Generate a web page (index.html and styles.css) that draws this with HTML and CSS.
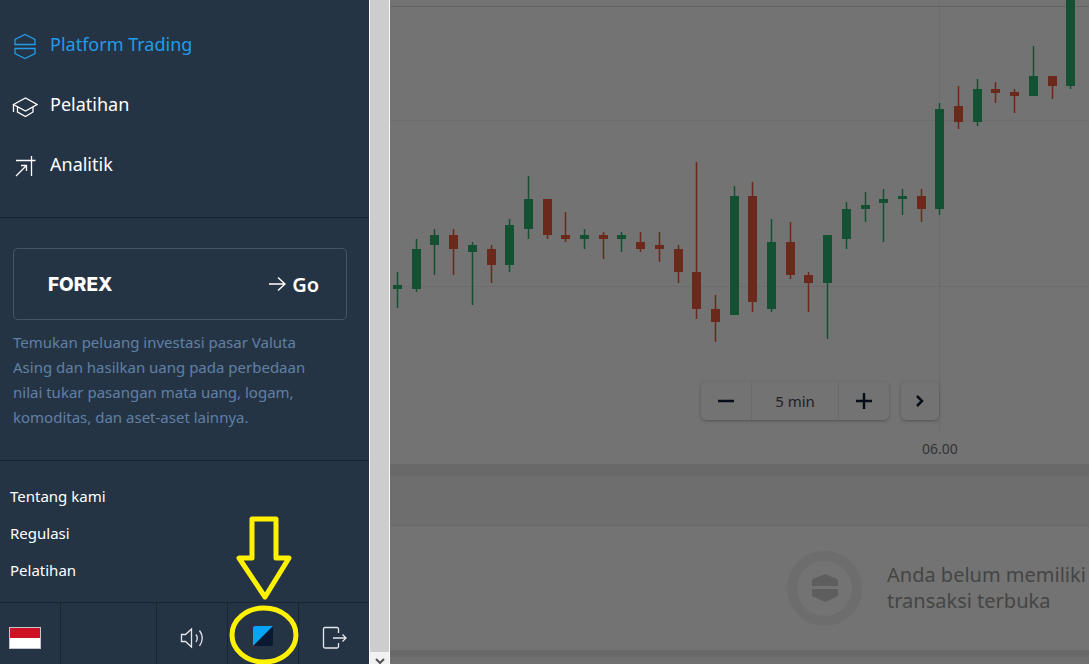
FILE: index.html
```html
<!DOCTYPE html>
<html lang="id">
<head>
<meta charset="utf-8">
<title>Platform Trading</title>
<link rel="stylesheet" href="styles.css">
</head>
<body>
<div class="app">
  <aside class="sidebar">
    <nav class="menu">
      <a class="menu-item active" href="#">
        <svg class="menu-icon" viewBox="0 0 26 26"><path d="M3 11.500V6.500L13 1.500L23 6.500V11.500ZM3 15.500H23V20.500L13 25.500L3 20.500Z"/></svg>
        Platform Trading
      </a>
      <a class="menu-item" href="#">
        <svg class="menu-icon" viewBox="0 0 26 26"><path d="M1.500 11.500L13.500 5L25 11.500L13.500 18ZM1.500 11.500V19M5.500 14V19L13.500 23.500L21 19V14"/></svg>
        Pelatihan
      </a>
      <a class="menu-item" href="#">
        <svg class="menu-icon" viewBox="0 0 26 26"><path d="M4 7.500H23.500M19.500 3V23M4 23L14.500 12.500M9 12.500H14.500V18"/></svg>
        Analitik
      </a>
    </nav>
    <section class="promo">
      <a class="promo-card" href="#">
        <span class="promo-name">FOREX</span>
        <span class="promo-go">
          <svg class="go-arrow" viewBox="0 0 18 16"><path d="M1 8H17M10 1.500L17 8L10 14.500"/></svg>
          Go
        </span>
      </a>
      <p class="promo-text">Temukan peluang investasi pasar Valuta Asing dan hasilkan uang pada perbedaan nilai tukar pasangan mata uang, logam, komoditas, dan aset-aset lainnya.</p>
    </section>
    <nav class="links">
      <a href="#">Tentang kami</a>
      <a href="#">Regulasi</a>
      <a href="#">Pelatihan</a>
    </nav>
    <div class="toolbar">
      <button class="tool" aria-label="Bahasa Indonesia"><span class="flag"></span></button>
      <span class="tool"></span>
      <button class="tool" aria-label="Suara">
        <svg class="tool-icon" viewBox="0 0 26 26"><path d="M2.500 9.500H6.500L12.500 4V22L6.500 16.500H2.500ZM17 9.500Q19.500 13 17 17M20.500 5.500Q26 13 20.500 21"/></svg>
      </button>
      <button class="tool" aria-label="Tema">
        <svg class="theme-icon" viewBox="0 0 20 20"><rect class="theme-dark" width="20" height="20" rx="2"/><path class="theme-light" d="M2 0H20L0 20V2Q0 0 2 0Z"/></svg>
      </button>
      <button class="tool" aria-label="Keluar">
        <svg class="tool-icon" viewBox="0 0 26 26"><path d="M17.500 8V4Q17.500 2.500 16 2.500H4Q2.500 2.500 2.500 4V21.500Q2.500 23 4 23H16Q17.500 23 17.500 21.500V18M12 13H25M21.500 9.500L25 13L21.500 16.500"/></svg>
      </button>
    </div>
    <svg class="pointer" viewBox="0 0 72 152"><path d="M24 7H48V46H61L37 85L11 46H24Z"/><ellipse cx="36" cy="123" rx="32" ry="27"/></svg>
  </aside>
  <div class="scroller"><button class="scroll-down" aria-label="Gulir ke bawah"><svg class="scroll-icon" viewBox="0 0 10 7"><path d="M1 1L5 5L9 1"/></svg></button></div>
  <main class="main">
    <section class="chart">
      <svg class="plot" id="plot">
        <path class="grid-line strong" d="M0 6.500H4000"/>
        <path class="grid-line" d="M0 120.500H4000M0 286.500H4000M549.500 0V432"/>
        <text class="axis-label" x="550" y="454">06.00</text>
      </svg>
      <div class="controls">
        <div class="stepper">
          <button class="step" aria-label="Kurangi"><svg class="step-icon" viewBox="0 0 16 16"><path d="M0 8H16"/></svg></button>
          <span class="period">5 min</span>
          <button class="step" aria-label="Tambah"><svg class="step-icon" viewBox="0 0 16 16"><path d="M0 8H16M8 0V16"/></svg></button>
        </div>
        <button class="next" aria-label="Berikutnya"><svg class="step-icon" viewBox="0 0 16 16"><path d="M5 3L10 8L5 13"/></svg></button>
      </div>
    </section>
    <div class="tabs"></div>
    <section class="empty">
      <span class="badge"><svg class="badge-icon" viewBox="0 0 26 28"><path d="M0 12V7Q0 6 1 5L12 .5Q13 0 14 .5L25 5Q26 6 26 7V12ZM0 15H26V21Q26 22 25 22.500L14 27.500Q13 28 12 27.500L1 22.500Q0 22 0 21Z"/></svg></span>
      <p class="empty-text">Anda belum memiliki<br>transaksi terbuka</p>
    </section>
    <div class="bottom"></div>
  </main>
</div>
<script src="chart.js"></script>
</body>
</html>
```

FILE: styles.css
```css
* { box-sizing: border-box; }
body {
  margin: 0;
  font-family: "Noto Sans", "Open Sans", sans-serif;
  color: #fff;
}
a { color: inherit; text-decoration: none; }
p { margin: 0; }
button {
  margin: 0;
  padding: 0;
  border: 0;
  background: none;
  color: inherit;
  font: inherit;
}
svg { display: block; flex: none; fill: none; }
.app {
  display: grid;
  grid-template-columns: 369px 21px minmax(0, 1fr);
  grid-template-rows: minmax(0, 1fr);
  height: 100vh;
  overflow: hidden;
}

.sidebar {
  position: relative;
  display: flex;
  flex-direction: column;
  background: #253444;
}
.menu { padding: 14px 12px 23px; border-bottom: 1px solid #172431; }
.menu-item {
  display: flex;
  align-items: center;
  gap: 12px;
  height: 60px;
  font-size: 18px;
}
.menu-item.active { color: #219cea; }
.menu-icon {
  width: 26px;
  height: 26px;
  margin-top: 4px;
  stroke: currentColor;
  stroke-width: 1.3;
}
.promo {
  padding: 30px 22px 30px 13px;
  border-bottom: 1px solid #172431;
}
.promo-card {
  display: flex;
  align-items: center;
  justify-content: space-between;
  height: 72px;
  padding: 0 27px 0 34px;
  border: 1px solid #43556a;
  border-radius: 5px;
}
.promo-name { font: 800 19px Inter, sans-serif; }
.promo-go {
  display: flex;
  align-items: center;
  gap: 6px;
  font-size: 20px;
  font-weight: 600;
}
.go-arrow { width: 18px; height: 16px; stroke: #fff; stroke-width: 1.4; }
.promo-text {
  padding: 10px 20px 0 0;
  color: #6080a4;
  font-size: 15px;
  line-height: 25px;
}
.links {
  display: flex;
  flex: 1;
  flex-direction: column;
  padding: 17px 10px 13px;
  font-size: 15px;
  line-height: 37px;
}
.toolbar {
  display: grid;
  grid-template-columns: 61px 96px 71px 71px 1fr;
  height: 62px;
  border-top: 1px solid #172431;
}
.tool {
  display: flex;
  align-items: center;
  justify-content: center;
  padding-top: 8px;
  border-right: 1px solid #172431;
}
.tool:first-child { padding-right: 10px; }
.tool:last-child { border-right: 0; }
.flag {
  width: 32px;
  height: 22px;
  border: 1px solid #c3c7cc;
  background: linear-gradient(#cf1126 50%, #fff 50%);
}
.tool-icon { width: 26px; height: 26px; stroke: #e4e8ec; stroke-width: 1.3; }
.theme-icon { width: 20px; height: 20px; margin-top: -3px; }
.theme-dark { fill: #0b1a30; }
.theme-light { fill: #05a4f4; }
.pointer {
  position: absolute;
  bottom: 0;
  left: 228px;
  width: 72px;
  height: 152px;
  stroke: #fff200;
  stroke-width: 5;
  stroke-linejoin: round;
  pointer-events: none;
}

.scroller {
  display: flex;
  flex-direction: column;
  justify-content: flex-end;
  border: solid #fafafa;
  border-width: 0 1px;
  background: #cdcdcd;
}
.scroll-down {
  display: flex;
  justify-content: center;
  height: 12px;
  padding-top: 6px;
  background: #f1f1f1;
}
.scroll-icon { width: 10px; height: 7px; stroke: #505050; stroke-width: 2; }

.main {
  display: flex;
  flex-direction: column;
  overflow: hidden;
  background: #737373;
  color: #444545;
}
.chart { position: relative; height: 464px; }
.plot { width: 100%; height: 464px; }
.grid-line { stroke: #6c6c6c; }
.grid-line.strong { stroke: #636363; }
.axis-label { fill: #333; font-size: 14px; text-anchor: middle; }
.wick { stroke-width: 1.5; }
.candle-body { stroke-width: 9; }
.up { stroke: #145032; }
.down { stroke: #6b291b; }
.controls {
  position: absolute;
  top: 382px;
  left: 311px;
  display: flex;
  gap: 12px;
  height: 38px;
}
.stepper, .next {
  display: flex;
  align-items: center;
  border-radius: 5px;
  background: #737373;
  box-shadow: 0 1px 3px #545454;
}
.step {
  display: flex;
  align-items: center;
  justify-content: center;
  width: 50px;
  height: 100%;
}
.step-icon { width: 16px; height: 16px; stroke: #080e19; stroke-width: 2.5; }
.period {
  width: 88px;
  border: solid #6b6b6b;
  border-width: 0 1px;
  color: #202226;
  font-size: 15px;
  line-height: 38px;
  text-align: center;
}
.next { justify-content: center; width: 38px; }
.tabs {
  height: 62px;
  border-top: 12px solid #696969;
  border-bottom: 1px solid #696969;
  background: #6e6e6e;
}
.empty {
  display: flex;
  align-items: center;
  gap: 25px;
  height: 124px;
  padding-left: 397px;
}
.badge {
  display: flex;
  flex: none;
  align-items: center;
  justify-content: center;
  width: 75px;
  height: 75px;
  border: 10px solid #6d6d6d;
  border-radius: 50%;
}
.badge-icon { width: 26px; height: 28px; fill: #5e5e5e; }
.empty-text { font-size: 20px; line-height: 26px; white-space: nowrap; }
.bottom { flex: 1; border-top: 7px solid #696969; background: #707070; }
```

FILE: chart.js
```js
// Each candle: [wick top, body top, body bottom, wick bottom, direction]
const candles = [
  [272, 285, 289, 308, "up"], [239, 249, 289, 292, "up"], [229, 235, 245, 275, "up"],
  [229, 235, 249, 275, "down"], [242, 245, 252, 305, "up"], [245, 249, 265, 283, "down"],
  [219, 225, 265, 272, "up"], [176, 199, 229, 239, "up"], [199, 199, 235, 239, "down"],
  [212, 235, 239, 242, "down"], [229, 235, 239, 249, "up"], [232, 235, 239, 259, "down"],
  [232, 235, 239, 252, "up"], [232, 242, 249, 252, "down"], [232, 245, 249, 262, "down"],
  [245, 249, 272, 283, "down"], [162, 272, 309, 319, "down"], [295, 309, 322, 342, "down"],
  [186, 196, 315, 315, "up"], [182, 196, 302, 312, "down"], [219, 242, 309, 312, "up"],
  [222, 242, 275, 279, "down"], [272, 275, 283, 312, "down"], [235, 235, 283, 339, "up"],
  [202, 209, 239, 249, "up"], [192, 205, 209, 222, "up"], [189, 199, 203, 242, "up"],
  [189, 196, 199, 215, "up"], [189, 196, 209, 222, "down"], [103, 109, 209, 215, "up"],
  [86, 106, 122, 129, "down"], [79, 89, 122, 126, "up"], [82, 89, 93, 103, "down"],
  [89, 92, 96, 113, "down"], [46, 76, 96, 96, "up"], [76, 76, 86, 99, "down"],
  [-5, -5, 86, 89, "up"]
];
const plot = document.getElementById("plot");
const firstX = 8;
const step = 18.7;

function bar(x, top, bottom, className) {
  const path = document.createElementNS("http://www.w3.org/2000/svg", "path");
  path.setAttribute("d", `M${x} ${top}V${bottom}`);
  path.setAttribute("class", className);
  plot.appendChild(path);
}

candles.forEach(([high, top, bottom, low, direction], i) => {
  const x = Math.round(firstX + i * step) - 0.5;
  bar(x, high, low, `wick ${direction}`);
  bar(x, top, bottom, `candle-body ${direction}`);
});
```
